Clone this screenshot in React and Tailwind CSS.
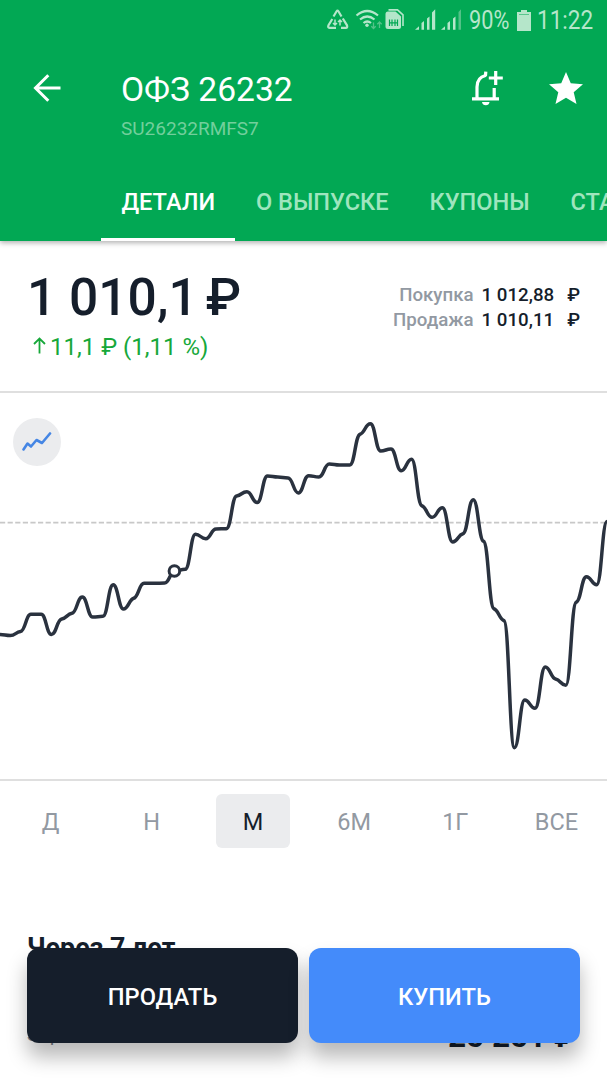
import { clsx as cn } from "clsx"

const TABS = ["ДЕТАЛИ", "О ВЫПУСКЕ", "КУПОНЫ", "СТАКАН"]
const PERIODS = ["Д", "Н", "М", "6М", "1Г", "ВСЕ"]
const MARKER = 17

const CHART_TOP = 393
const STEP = 607 / 59
const POINTS = [
  634.5, 635.5, 631.5, 614.3, 614.3, 634.5, 619, 613.3, 597, 617, 616.3, 584.7, 609, 598.3, 583.3, 583.3, 583, 571,
  569.3, 534.3, 538.7, 529, 528.7, 496, 491.7, 502.5, 476, 477, 478, 493, 475.7, 477, 464, 465, 465, 434.3, 423.7, 451,
  449, 470.7, 459.3, 505.7, 517.3, 507.7, 542, 533.7, 499.7, 541.3, 608.7, 620.7, 747.7, 700, 708.3, 667, 679, 685.3,
  602.3, 576.7, 584.7, 521.5,
].map((y, i) => ({ x: i * STEP, y: y - CHART_TOP }))

// cubic segments with nearly flat tangents, so every point reads as a soft step
const buildPath = (pts) => {
  const slope = (i) => (pts[i + 1].y - pts[i].y) / STEP
  const tangents = pts.map((_, i) => {
    if (i === 0 || i === pts.length - 1) return 0
    const a = slope(i - 1)
    const b = slope(i)
    if (a * b <= 0) return 0
    return Math.sign(a) * Math.min(Math.abs(a), Math.abs(b), 1) * 0.3
  })
  let d = `M${pts[0].x} ${pts[0].y}`
  for (let i = 1; i < pts.length; i++) {
    const p = pts[i - 1]
    const q = pts[i]
    const h = STEP / 2.1
    d += `C${p.x + h} ${p.y + tangents[i - 1] * h} ${q.x - h} ${q.y - tangents[i] * h} ${q.x} ${q.y}`
  }
  return d
}

function StatusIcons() {
  return (
    <svg width="138" height="28" viewBox="325 6 138 28" fill="none" stroke="#b5e6ca" strokeWidth="2.2">
      <path d="M333.500 16.500l3.100-5.200q.9-1.300 1.800 0l3.100 5.200M342.800 18.500l4.200 6.800q.8 2.500-1.200 2.500H341M336 27.800h-6.500q-2-.2-1-2.500l3.800-6.300" />
      <path d="M335 19.500v5.500M333 23l2 2 2-2M340 25.500V20M338 22l2-2 2 2" strokeWidth="1.500" />
      <path d="M356.500 15.500q10.700-9 21.500 0M360 19.500q7.200-6 14.500 0M363.500 23q3.700-3 7.500 0" />
      <circle cx="367" cy="25.300" r="1.700" fill="#b5e6ca" stroke="none" />
      <path d="M373.500 22.500v6M371.300 26.300l2.200 2.200 2.200-2.200M379.500 28v-6M377.300 24.200l2.200-2.200 2.200 2.200" stroke="#54c288" strokeWidth="1.300" />
      <path d="M388.500 9.900h9l5.500 5V26" strokeWidth="1.600" />
      <path d="M388 11.600h7.500l5.500 5v10q0 2.500-2.500 2.500h-10.500q-2.500 0-2.500-2.500V14.100q0-2.500 2.500-2.500z" fill="#b5e6ca" stroke="none" />
      <path d="M389.500 19.500v6.500M392 19.500v6.500M395 19.500v6.500M397.500 19.500v6.500M389.500 22.800h8" stroke="#02a854" strokeWidth="1.200" />
      <path d="M415 29.800l4-3.500v3.500zM421.500 29.800v-6.800l2.500-2v8.800zM427 29.800V18.500l2.500-2v13.300zM432 29.800V12.500l3.200-3.200v20.500z" fill="#b5e6ca" stroke="none" />
      <path d="M441 29.800l4-3.500v3.500zM447.500 29.800v-6.800l2.500-2v8.800zM453 29.800V18.500l2.500-2v13.300z" fill="#b5e6ca" stroke="none" />
      <path d="M458.500 29.800V12l2.500-2.700v20.500z" fill="#54c288" stroke="none" />
    </svg>
  )
}

function BackIcon() {
  return (
    <svg width="28" height="28" viewBox="0 0 28 28" fill="none" stroke="#fff" strokeWidth="3">
      <path d="M27.500 14H2.500M15.300 1.200L2.500 14l12.800 12.800" />
    </svg>
  )
}

function BellPlusIcon() {
  return (
    <svg width="34" height="38" viewBox="470 69 34 38" fill="none" stroke="#fff" strokeWidth="3.200">
      <path d="M477 98.500V87q0-9.500 8.500-11.500l.3-3.800" strokeLinejoin="bevel" />
      <path d="M494.200 88v10M472 98.800h27M488.800 78h14M495.700 71v14" />
      <path d="M482 102h7.500q-.5 3.300-3.700 3.300t-3.800-3.300z" fill="#fff" stroke="none" />
    </svg>
  )
}

function StarIcon() {
  return (
    <svg width="34" height="32" viewBox="2 2 20 19" fill="#fff" preserveAspectRatio="none">
      <path d="M12 17.270L18.180 21l-1.640-7.030L22 9.240l-7.190-.61L12 2 9.190 8.630 2 9.240l5.460 4.730L5.820 21z" />
    </svg>
  )
}

function Header() {
  return (
    <header className="relative z-10 flex h-[241px] shrink-0 flex-col bg-[#02a854] shadow-[0_2px_5px_rgba(0,0,0,0.3)]">
      <div className="flex h-10 items-center justify-end pr-[14px] text-[25px] text-[#b5e6ca]">
        <StatusIcons />
        <span className="ml-[6px] w-[41px] pt-[2px] leading-10 whitespace-nowrap">
          <span className="inline-block origin-left scale-x-[0.87]">90%</span>
        </span>
        <svg className="ml-[7px]" width="14" height="21" viewBox="0 0 14 21" fill="#b5e6ca">
          <path d="M4 0h6v2h4v19H0V2h4z" />
          <path d="M2 4.500h10" stroke="#02a854" strokeWidth="1" opacity=".5" />
        </svg>
        <span className="ml-[6px] w-[56px] pt-[2px] leading-10 whitespace-nowrap">
          <span className="inline-block origin-left scale-x-[0.9]">11:22</span>
        </span>
      </div>
      <div className="flex h-[123px] pt-[29px] pr-[24px] pl-[33px]">
        <div className="w-[88px] pt-[5px]"><BackIcon /></div>
        <div className="flex-1">
          <h1 className="h-10 pt-px text-[33.600px] leading-10 text-white">ОФЗ 26232</h1>
          <p className="mt-[8px] text-[19px] leading-6 text-[#72cf9c]">SU26232RMFS7</p>
        </div>
        <div className="mr-[45px]"><BellPlusIcon /></div>
        <div className="pt-[3px]"><StarIcon /></div>
      </div>
      <nav className="ml-[101px] flex h-[78px] overflow-hidden">
        {TABS.map((tab, i) => (
          <div
            key={tab}
            className={cn(
              "shrink-0 border-b-[3px] px-[20.400px] pt-[4px] text-[23.600px] font-medium leading-[71px]",
              i === 0 ? "border-white text-white" : "border-transparent text-[#9fe5be]"
            )}
          >
            {tab}
          </div>
        ))}
      </nav>
    </header>
  )
}

function Quote({ label, value }) {
  return (
    <div className="flex justify-end text-[18.700px] font-medium leading-[25.500px]">
      <span className="text-[#9299a2]">{label}</span>
      <span className="ml-2">{value}</span>
      <span className="ml-[13px]">₽</span>
    </div>
  )
}

function Price() {
  return (
    <section className="flex h-[152px] shrink-0 justify-between border-b-2 border-[#dfdfdf] pt-[27px] pr-[27px] pl-[27px]">
      <div>
        <div className="flex text-[51.500px] font-medium leading-[60px] whitespace-nowrap">
          <span>1 010,1</span>
          <span className="ml-[8px]">₽</span>
        </div>
        <div className="mt-[3px] flex items-center pl-[6px] text-[24px] leading-[32px] whitespace-nowrap text-[#17a83a]">
          <svg className="-mt-[3px]" width="13" height="17" viewBox="0 0 13 17" fill="none" stroke="currentColor" strokeWidth="1.800">
            <path d="M6.500 16.500V1.500M1 7l5.500-5.500L12 7" />
          </svg>
          <span className="ml-[4px]">11,1 ₽ (1,11 %)</span>
        </div>
      </div>
      <div className="pt-[14.500px]">
        <Quote label="Покупка" value="1 012,88" />
        <Quote label="Продажа" value="1 010,11" />
      </div>
    </section>
  )
}

function Chart() {
  const marker = POINTS[MARKER]
  return (
    <section className="relative h-[388px] shrink-0 border-b-2 border-[#dfdfdf]">
      <svg className="block" width="607" height="386" viewBox="0 0 607 386" fill="none">
        <path d="M0 129.700H607" stroke="#c8c8c8" strokeWidth="1.800" strokeDasharray="5.200 2.400" />
        <path d={buildPath(POINTS)} stroke="#2a323f" strokeWidth="3.500" strokeLinejoin="round" />
        <circle cx={marker.x - 0.5} cy={marker.y} r="5.300" fill="#fff" stroke="#2a323f" strokeWidth="3" />
      </svg>
      <button className="absolute top-[25px] left-[13px] flex size-[48px] items-center justify-center rounded-full bg-[#ebecee]">
        <svg className="-mt-[2px]" width="30" height="20" viewBox="0 0 30 20" fill="none" stroke="#4586e4" strokeWidth="2.600" strokeLinecap="round" strokeLinejoin="round">
          <path d="M1.500 18.500l4-6 3.500 3L14.500 9l5.500 3 8-9.500" />
        </svg>
      </button>
    </section>
  )
}

function Periods() {
  return (
    <div className="flex shrink-0 pt-[13px]">
      {PERIODS.map((period) => (
        <div key={period} className="flex flex-1 justify-center">
          <button
            className={cn(
              "h-[54px] w-[74px] rounded-md pt-[3px] text-[23.500px]",
              period === "М" ? "bg-[#ebecee] text-[#151e2b]" : "text-[#9299a2]"
            )}
          >
            {period}
          </button>
        </div>
      ))}
    </div>
  )
}

export default function App() {
  return (
    <div className="relative flex h-[1080px] w-[607px] flex-col overflow-hidden bg-white font-['Roboto',sans-serif] text-[#151e2b]">
      <Header />
      <Price />
      <Chart />
      <Periods />
      <section className="mt-[84px] px-[27px]">
        <h2 className="text-[26.800px] font-bold leading-8">Через 7 лет</h2>
        <div className="mt-[53px] flex items-start justify-between">
          <span className="pt-px text-[20px] leading-8 text-[#7d848d]">Заработок</span>
          <span className="w-[132px] text-[31.500px] font-bold leading-10 whitespace-nowrap">25 251 ₽</span>
        </div>
      </section>
      <div className="absolute inset-x-[27px] top-[948px] flex gap-[11px] text-[23.700px] font-medium text-white">
        <button className="h-[95px] flex-1 rounded-xl bg-[#151e2b] pt-[4px] shadow-[0_14px_20px_rgba(0,0,0,0.28)]">ПРОДАТЬ</button>
        <button className="h-[95px] flex-1 rounded-xl bg-[#448bfa] pt-[4px] shadow-[0_14px_20px_rgba(0,0,0,0.28)]">КУПИТЬ</button>
      </div>
    </div>
  )
}
